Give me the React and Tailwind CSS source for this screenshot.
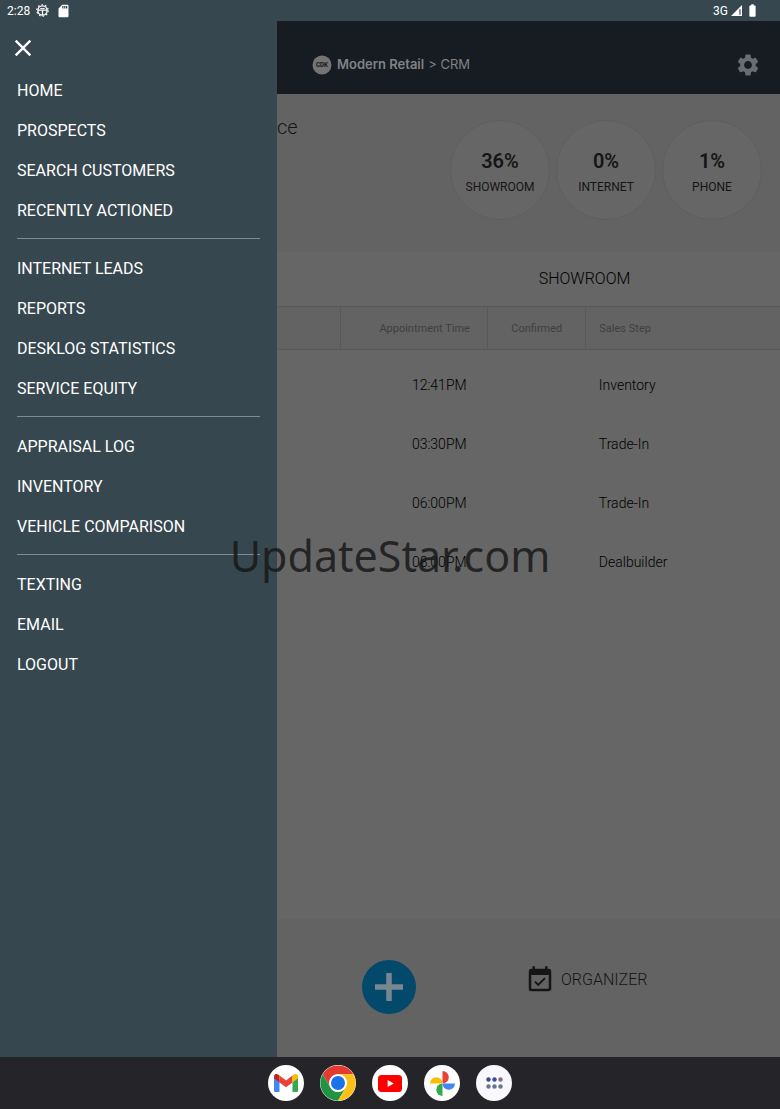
import React from "react";
import { MdSettings, MdClose, MdEventAvailable, MdSdCard, MdBatteryFull } from "react-icons/md";

const menuGroups = [
  ["HOME", "PROSPECTS", "SEARCH CUSTOMERS", "RECENTLY ACTIONED"],
  ["INTERNET LEADS", "REPORTS", "DESKLOG STATISTICS", "SERVICE EQUITY"],
  ["APPRAISAL LOG", "INVENTORY", "VEHICLE COMPARISON"],
  ["TEXTING", "EMAIL", "LOGOUT"],
];

const metrics = [
  { value: "36%", label: "SHOWROOM" },
  { value: "0%", label: "INTERNET" },
  { value: "1%", label: "PHONE" },
];

const rows = [
  { time: "12:41PM", step: "Inventory" },
  { time: "03:30PM", step: "Trade-In" },
  { time: "06:00PM", step: "Trade-In" },
  { time: "08:00PM", step: "Dealbuilder" },
];

function StatusBar() {
  return (
    <div className="flex h-[21px] shrink-0 items-center justify-between bg-[#37474f] pr-5 pl-[7px] text-xs text-white">
      <div className="flex items-center">
        <span>2:28</span>
        <svg viewBox="0 0 14 14" className="ml-1.5 h-[13px] w-[13px]" fill="none" stroke="#fff">
          <circle cx="7" cy="7" r="5" strokeWidth="1.5" />
          <circle cx="7" cy="7" r="6.2" strokeWidth="1.2" strokeDasharray="1.7 2.2" />
          <path d="M2 6.5h10M7 6.5v5.500" strokeWidth="1.4" />
          <path d="M4.500 4.800h5" strokeWidth="1" />
        </svg>
        <MdSdCard className="ml-[7px] h-4 w-[15px]" />
      </div>
      <div className="flex items-center">
        <span>3G</span>
        <svg viewBox="0 0 12 12" className="ml-[3px] h-[11px] w-[11px]">
          <path d="M12 0v12H0z" fill="#fff" />
          <path d="M9.800 4.500v6" stroke="#37474f" strokeWidth="1.300" />
        </svg>
        <MdBatteryFull className="ml-[3px] h-[15px] w-[15px]" />
      </div>
    </div>
  );
}

function Drawer() {
  return (
    <aside className="w-[277px] shrink-0 bg-[#37474f] px-[17px] text-white">
      <button aria-label="Close menu" className="-ml-1.5 mt-[15px] flex h-6 w-6 items-center justify-center">
        <MdClose className="h-7 w-7 shrink-0" />
      </button>
      <nav className="mt-[11px]">
        {menuGroups.map((group, i) => (
          <React.Fragment key={group[0]}>
            {i > 0 && <hr className="mt-[7px] mb-2.5 border-t border-[#7f8b90]" />}
            <ul>
              {group.map((item) => (
                <li key={item}>
                  <a href="#" className="flex h-10 items-center text-base">
                    {item}
                  </a>
                </li>
              ))}
            </ul>
          </React.Fragment>
        ))}
      </nav>
    </aside>
  );
}

function AppHeader() {
  return (
    <header className="flex h-[73px] items-center justify-between bg-[#171b22] pt-[15px] pr-[19px] pl-[35px] text-[#808285]">
      <div className="flex items-center font-['Inter',sans-serif] text-[13px]">
        <svg viewBox="0 0 20 20" className="mr-[5px] h-5 w-5">
          <circle cx="10" cy="10" r="9.500" fill="#747474" />
          <text x="10" y="12" textAnchor="middle" fontSize="5.500" fontWeight="800" fill="#171b22">
            CDK
          </text>
        </svg>
        <span className="font-semibold">Modern Retail</span>
        <span className="ml-1">&gt; CRM</span>
      </div>
      <button aria-label="Settings">
        <MdSettings className="h-[26px] w-[26px] text-[#696c70]" />
      </button>
    </header>
  );
}

function Dock() {
  const tile = "flex h-9 w-9 items-center justify-center rounded-full bg-white";
  return (
    <footer className="flex h-[52px] shrink-0 items-center justify-center gap-4 bg-[#242429]">
      <button aria-label="Gmail" className={tile}>
        <svg viewBox="0 0 24 18" className="h-[18px] w-6">
          <path d="M0 3v13.400C0 17.300.7 18 1.600 18h3.900V7.200z" fill="#4285f4" />
          <path d="M24 3v13.400c0 .9-.7 1.600-1.600 1.600h-3.900V7.200z" fill="#34a853" />
          <path d="M5.500 1.600v6.800L12 13.300l6.500-4.900V1.600L12 6.500z" fill="#ea4335" />
          <path d="M0 2.500v1.800l5.500 4.100V1.600L4 .5C2.200-.8 0 .4 0 2.500z" fill="#c5221f" />
          <path d="M24 2.500v1.800l-5.500 4.100V1.600L20 .5c1.800-1.300 4-.1 4 2z" fill="#fbbc04" />
        </svg>
      </button>
      <button aria-label="Chrome" className={tile}>
        <svg viewBox="0 0 48 48" className="h-9 w-9">
          <path d="M3.650 12.250A23.500 23.500 0 0 1 44.350 12.250H24A11.750 11.750 0 0 0 13.820 29.880z" fill="#e33b2e" />
          <path d="M3.650 12.250A23.500 23.500 0 0 0 24 47.500L34.180 29.880A11.750 11.750 0 0 1 13.820 29.880z" fill="#229342" />
          <path d="M44.350 12.250A23.500 23.500 0 0 1 24 47.500L34.180 29.880A11.750 11.750 0 0 0 24 12.250z" fill="#fbc116" />
          <circle cx="24" cy="24" r="11.750" fill="#fff" />
          <circle cx="24" cy="24" r="9.300" fill="#1a73e8" />
        </svg>
      </button>
      <button aria-label="YouTube" className={tile}>
        <svg viewBox="0 0 24 17" className="h-[17px] w-6">
          <rect width="24" height="17" rx="3.500" fill="#f00" />
          <path d="M9.600 5v7l6.200-3.500z" fill="#fff" />
        </svg>
      </button>
      <button aria-label="Photos" className={tile}>
        <svg viewBox="0 0 24 24" className="h-[25px] w-[25px]">
          <path d="M12 0a6 6 0 0 1 0 12z" fill="#ea4335" />
          <path d="M24 12a6 6 0 0 1-12 0z" fill="#4285f4" />
          <path d="M12 24a6 6 0 0 1 0-12z" fill="#34a853" />
          <path d="M0 12a6 6 0 0 1 12 0z" fill="#fbbc04" />
        </svg>
      </button>
      <button aria-label="All apps" className="flex h-9 w-9 items-center justify-center rounded-full bg-[#f8f8fe]">
        <svg viewBox="0 0 17 12" className="h-3 w-[17px]">
          <circle cx="2.500" cy="2.500" r="2.200" fill="#3c4a8c" />
          <circle cx="8.500" cy="2.500" r="2.200" fill="#3350a0" />
          <circle cx="14.500" cy="2.500" r="2.200" fill="#8a6a82" />
          <circle cx="2.500" cy="9.500" r="2.200" fill="#6c7690" />
          <circle cx="8.500" cy="9.500" r="2.200" fill="#66748f" />
          <circle cx="14.500" cy="9.500" r="2.200" fill="#66788c" />
        </svg>
      </button>
    </footer>
  );
}

export default function App() {
  return (
    <div className="relative flex min-h-screen flex-col bg-[#666666] font-['Roboto',sans-serif] text-[#151515]">
      <StatusBar />
      <div className="flex flex-1">
        <Drawer />
        <main className="flex min-w-0 flex-1 flex-col">
          <AppHeader />
          <section className="flex h-[158px] justify-between bg-[#636363] pr-[18px]">
            <h1 className="pt-[19px] text-xl font-light">ce</h1>
            <div className="flex gap-1.5 pt-[26px]">
              {metrics.map((m) => (
                <div
                  key={m.label}
                  className="flex h-[100px] w-[100px] flex-col items-center rounded-full border border-[#5f5f5f] bg-[#666666] pt-[26px]"
                >
                  <span className="text-xl leading-7 font-semibold">{m.value}</span>
                  <span className="mt-0.5 text-xs leading-5">{m.label}</span>
                </div>
              ))}
            </div>
          </section>
          <h2 className="flex h-[54px] items-center justify-center pl-[112px] text-base font-light text-black">
            SHOWROOM
          </h2>
          <table className="w-full table-fixed border-collapse text-left">
            <colgroup>
              <col className="w-[12.7%]" />
              <col className="w-[29.2%]" />
              <col className="w-[19.5%]" />
              <col />
            </colgroup>
            <thead>
              <tr className="h-[43px] border-y border-[#595959] bg-[#636363] text-[11px] text-[#3f3f3f]">
                <th className="border-r border-[#595959]" aria-label="Customer"></th>
                <th className="border-r border-[#595959] pt-0.5 pl-[38px] font-normal">Appointment Time</th>
                <th className="border-r border-[#595959] pt-0.5 text-center font-normal">Confirmed</th>
                <th className="pt-0.5 pl-[13px] font-normal">Sales Step</th>
              </tr>
            </thead>
            <tbody className="text-sm font-light text-black">
              {rows.map((r) => (
                <tr key={r.time} className="h-[59px]">
                  <td></td>
                  <td className="pt-3 pl-[71px]">{r.time}</td>
                  <td></td>
                  <td className="pt-3 pl-[13px]">{r.step}</td>
                </tr>
              ))}
            </tbody>
          </table>
          <section className="mt-auto flex h-[138px] items-start bg-[#636363] pl-[85px]">
            <button
              aria-label="Add"
              className="mt-[41px] flex h-[54px] w-[54px] items-center justify-center rounded-full bg-[#02496b]"
            >
              <svg viewBox="0 0 28 28" className="h-7 w-7">
                <path d="M14 0v28M0 14h28" stroke="#77868f" strokeWidth="5.500" />
              </svg>
            </button>
            <button className="mt-[46px] ml-[109px] flex items-center gap-1.5 text-base font-light">
              <MdEventAvailable className="h-[30px] w-[30px]" />
              ORGANIZER
            </button>
          </section>
        </main>
      </div>
      <Dock />
      <div className="pointer-events-none absolute inset-0 flex items-center justify-center pt-1">
        <span className="font-['Noto_Sans',sans-serif] text-[43px] text-[#181818]/85">UpdateStar.com</span>
      </div>
    </div>
  );
}
